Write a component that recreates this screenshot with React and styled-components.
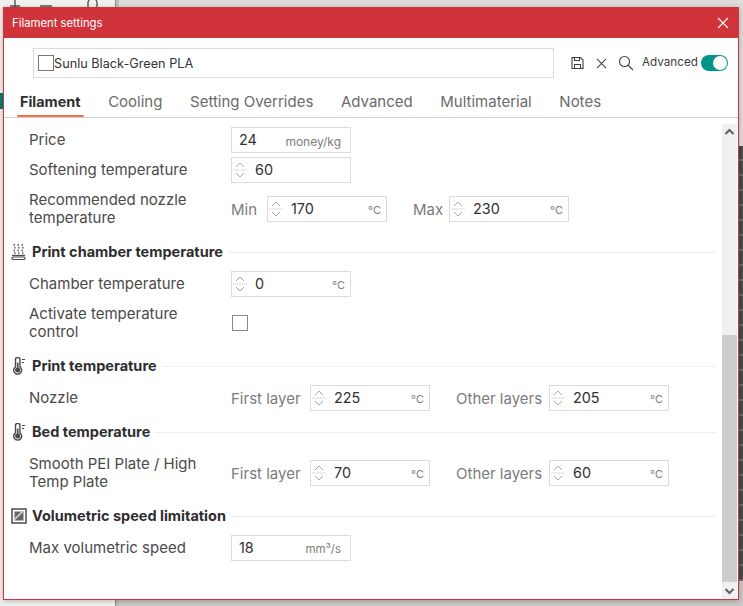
import React from "react";
import styled, { createGlobalStyle } from "styled-components";

const Global = createGlobalStyle`
  html, body { margin: 0; padding: 0; width: 743px; height: 606px; overflow: hidden; background: #e3e3e3; }
  * { box-sizing: border-box; }
  body { font-family: "Inter", "Noto Sans", sans-serif; }
`;

const Desktop = styled.div`
  position: relative; width: 743px; height: 606px; display: flex; overflow: hidden;
`;
const SidePane = styled.div`
  position: relative; width: 119px; flex: none; background: #f1f1f1; border-right: 3px solid #bdbdbd;
  box-shadow: inset -1px 0 0 #8d8d8d;
`;
const PaneIcons = styled.svg`
  display: block; width: 110px; height: 7px; fill: none; stroke: #555; stroke-width: 1.4;
`;
const PaneBadge = styled.div`
  position: absolute; left: 0; top: 93px; width: 3px; height: 16px; background: #00806f;
`;
const Canvas = styled.div`
  flex: 1; display: flex; flex-direction: column; background: #dcdcdc;
`;
const CanvasTop = styled.div`height: 146px; flex: none;`;
const CanvasDark = styled.div`
  height: 435px; flex: none; background: repeating-linear-gradient(#444a4c 0 13px, #696c6e 13px 15px);
`;
const CanvasBottom = styled.div`flex: 1; background: #c8c8c8;`;

const Dialog = styled.div`
  position: absolute; left: 3px; top: 7px; width: 736px; height: 593px;
  background: #fff; border: 1px solid #cf343a; display: flex; flex-direction: column;
  box-shadow: 0 1px 5px rgba(0,0,0,.25);
`;
const TitleBar = styled.div`
  height: 30px; flex: none; background: #d0343a; color: #fff; font-size: 11.3px;
  display: flex; align-items: center; justify-content: space-between; padding: 0 9px 0 8px;
`;
const CloseMark = styled.svg`width: 12px; height: 12px; stroke: #fff; stroke-width: 1.1; fill: none;`;

const Toolbar = styled.div`
  height: 42px; flex: none; display: flex; align-items: center; padding: 10px 0 2px 29px;
`;
const NameField = styled.div`
  width: 521px; height: 30px; flex: none; border: 1px solid #dcdcdc; display: flex; align-items: center; padding-left: 4px;
  font-size: 12.7px; color: #333; margin-right: 17px;
`;
const Swatch = styled.span`width: 16px; height: 16px; border: 1px solid #777; flex: none;`;
const ToolIcon = styled.svg`
  flex: none; fill: none; stroke: #3f3f3f; stroke-width: 1.1; margin-right: ${p => p.$gap}px;
`;
const AdvLabel = styled.span`
  width: 55px; flex: none; white-space: nowrap; font-size: 11.7px; color: #3c3c3c; margin-right: 4px; margin-top: -3px;
`;
const Toggle = styled.span`
  width: 27px; height: 16px; border-radius: 8px; background: #009688; position: relative; flex: none;
  &::after { content: ""; position: absolute; right: 1px; top: 1px; width: 14px; height: 14px; border-radius: 50%; background: #fff; }
`;

const TabBar = styled.div`
  height: 38px; flex: none; display: flex; align-items: center; padding: 0 0 0 16px; gap: 27.6px;
  border-bottom: 1px solid #d0d0d0;
`;
const Tab = styled.div`
  position: relative; height: 100%; display: flex; align-items: center; padding-top: 6px;
  font-size: ${p => (p.$active ? 14.4 : 15)}px;
  color: ${p => (p.$active ? "#2e2e2e" : "#6b6b6b")};
  font-weight: ${p => (p.$active ? 700 : 400)};
  &::after {
    content: ${p => (p.$active ? '""' : "none")}; position: absolute; left: -3px; right: -3px; bottom: 0; height: 2px;
    background: #f2734a; border-radius: 1px;
  }
`;

const Body = styled.div`flex: 1; display: flex; min-height: 0;`;
const Content = styled.div`
  flex: 1; padding: 9px 6px 0 7px; display: flex; flex-direction: column;
`;
const Scrollbar = styled.div`
  width: 15px; flex: none; margin: 6px 1px 0 0; background: #f0f0f0; display: flex; flex-direction: column;
`;
const ScrollArrow = styled.svg`
  width: 15px; height: 17px; flex: none; fill: none; stroke: #606060; stroke-width: 2;
`;
const ScrollGap = styled.div`flex: 1;`;
const ScrollThumb = styled.div`height: 247px; flex: none; background: #cdcdcd;`;

const Row = styled.div`
  display: flex; align-items: center; padding-left: 18px; min-height: 26px; margin-top: ${p => p.$mt || 0}px;
`;
const Label = styled.div`
  width: 202px; flex: none; font-size: 15px; line-height: 18px; color: #4a4a4a; padding-right: 10px;
`;
const SideText = styled.span`
  font-size: 15px; color: #7b7b7b; width: ${p => p.$w}px; flex: none;
`;
const Field = styled.div`
  width: 120px; height: 26px; flex: none; border: 1px solid #dcdcdc; display: flex; align-items: center; position: relative;
  margin-right: ${p => p.$mr || 0}px; background: #fff;
`;
const Spin = styled.svg`width: 17px; height: 24px; flex: none; fill: none; stroke: #aaa; stroke-width: 1;`;
const Num = styled.span`
  font-size: 14.4px; color: #303030; margin: -1px 0 0 ${p => (p.$plain ? 7 : 6)}px;
`;
const Unit = styled.span`
  position: absolute; right: ${p => p.$right}px; top: 6px; font-size: ${p => p.$size}px; color: #7d7d7d;
`;
const Check = styled.span`width: 16px; height: 16px; border: 1px solid #8a8a8a; display: block; margin-left: 1px;`;

const Section = styled.div`
  display: flex; align-items: center; height: 20px; margin-top: ${p => p.$mt}px; margin-bottom: ${p => p.$mb}px;
`;
const SecIcon = styled.svg`width: 16px; height: 18px; flex: none; fill: none; stroke: #4a4a4a; stroke-width: 1.2; margin-right: 5px;`;
const SecTitle = styled.div`font-size: 14.5px; font-weight: 700; color: #2e2e2e; white-space: nowrap; margin-top: -2px;`;
const SecLine = styled.div`flex: 1; height: 1px; background: #eeeeee; margin-left: 5px;`;

const Spinner = () => (
  <Spin viewBox="0 0 17 24">
    <path d="M4 9l4-4 4 4M4 15l4 4 4-4" />
    <path d="M1 12h14" stroke="#ddd" />
  </Spin>
);

const NumField = ({ value, unit, spin = true, right = 5, size = 11, mr }) => (
  <Field $mr={mr}>
    {spin && <Spinner />}
    <Num $plain={!spin}>{value}</Num>
    {unit && <Unit $right={right} $size={size}>{unit}</Unit>}
  </Field>
);

const Thermo = () => (
  <SecIcon viewBox="0 0 16 18">
    <path d="M4.500 2.500a2.200 2.200 0 0 1 4.400 0v7.300a4 4 0 1 1-4.400 0z" strokeWidth="1.400" />
    <circle cx="6.700" cy="13" r="2" fill="#4a4a4a" />
    <path d="M6.700 5.500V12" strokeWidth="1.600" />
    <path d="M11 2.500h3M11 5.500h2" />
  </SecIcon>
);
const Heat = () => (
  <SecIcon viewBox="0 0 16 18">
    <path d="M3.500 1c-1.700 1.700 1.700 3.300 0 5s1.700 3.300 0 5M7.500 1c-1.700 1.700 1.700 3.300 0 5s1.700 3.300 0 5M11.500 1c-1.700 1.700 1.700 3.300 0 5s1.700 3.300 0 5" strokeDasharray="2 1" />
    <path d="M1 12.500h13" />
    <rect x="1" y="14" width="13" height="2.500" rx="1.200" />
  </SecIcon>
);
const Volume = () => (
  <SecIcon viewBox="0 0 16 18">
    <rect x="1" y="2" width="14" height="14" stroke="#555" strokeWidth="1.600" />
    <rect x="3.500" y="4.500" width="9" height="9" fill="#666" stroke="none" />
    <path d="M3.500 12.500l8-8" stroke="#ddd" strokeWidth="1.400" />
  </SecIcon>
);

export default function App() {
  return (
    <Desktop>
      <Global />
      <SidePane>
        <PaneIcons viewBox="0 0 110 7">
          <path d="M15 0v7M10 6h10M40 6h12" />
          <path d="M88 7V3a4.500 4.500 0 0 1 9 0v4" />
        </PaneIcons>
        <PaneBadge />
      </SidePane>
      <Canvas>
        <CanvasTop />
        <CanvasDark />
        <CanvasBottom />
      </Canvas>
      <Dialog>
        <TitleBar>
          <span>Filament settings</span>
          <CloseMark viewBox="0 0 12 12"><path d="M1 1l10 10M11 1L1 11" /></CloseMark>
        </TitleBar>
        <Toolbar>
          <NameField><Swatch />Sunlu Black-Green PLA</NameField>
          <ToolIcon $gap={12} width="13" height="14" viewBox="0 0 13 14">
            <path d="M1 1.500h8.500l2.500 2.500v8.500H1zM3.500 1.500v3h5v-3M3.500 12.500V8.500h6v4" />
          </ToolIcon>
          <ToolIcon $gap={11} width="11" height="11" viewBox="0 0 12 12">
            <path d="M1 1l10 10M11 1L1 11" />
          </ToolIcon>
          <ToolIcon $gap={8} width="16" height="16" viewBox="0 0 16 16">
            <circle cx="6.500" cy="6.500" r="5" />
            <path d="M10 10l5 5" />
          </ToolIcon>
          <AdvLabel>Advanced</AdvLabel>
          <Toggle />
        </Toolbar>
        <TabBar>
          <Tab $active>Filament</Tab>
          <Tab>Cooling</Tab>
          <Tab>Setting Overrides</Tab>
          <Tab>Advanced</Tab>
          <Tab>Multimaterial</Tab>
          <Tab>Notes</Tab>
        </TabBar>
        <Body>
          <Content>
            <Row>
              <Label>Price</Label>
              <NumField value="24" unit="money/kg" right={9} size={12} spin={false} />
            </Row>
            <Row $mt={4}>
              <Label>Softening temperature</Label>
              <NumField value="60" />
            </Row>
            <Row $mt={8}>
              <Label>Recommended nozzle temperature</Label>
              <SideText $w={36}>Min</SideText>
              <NumField value="170" unit="°C" mr={26} />
              <SideText $w={36}>Max</SideText>
              <NumField value="230" unit="°C" />
            </Row>
            <Section $mt={15} $mb={9}><Heat /><SecTitle>Print chamber temperature</SecTitle><SecLine /></Section>
            <Row>
              <Label>Chamber temperature</Label>
              <NumField value="0" unit="°C" />
            </Row>
            <Row $mt={8}>
              <Label>Activate temperature control</Label>
              <Check />
            </Row>
            <Section $mt={15} $mb={9}><Thermo /><SecTitle>Print temperature</SecTitle><SecLine /></Section>
            <Row>
              <Label>Nozzle</Label>
              <SideText $w={79}>First layer</SideText>
              <NumField value="225" unit="°C" mr={26} />
              <SideText $w={93}>Other layers</SideText>
              <NumField value="205" unit="°C" />
            </Row>
            <Section $mt={11} $mb={13}><Thermo /><SecTitle>Bed temperature</SecTitle><SecLine /></Section>
            <Row>
              <Label>Smooth PEI Plate / High Temp Plate</Label>
              <SideText $w={79}>First layer</SideText>
              <NumField value="70" unit="°C" mr={26} />
              <SideText $w={93}>Other layers</SideText>
              <NumField value="60" unit="°C" />
            </Row>
            <Section $mt={15} $mb={9}><Volume /><SecTitle>Volumetric speed limitation</SecTitle><SecLine /></Section>
            <Row>
              <Label>Max volumetric speed</Label>
              <NumField value="18" unit={<>mm³/s</>} right={9} size={11.5} spin={false} />
            </Row>
          </Content>
          <Scrollbar>
            <ScrollArrow viewBox="0 0 15 17"><path d="M3.500 10l4-4 4 4" /></ScrollArrow>
            <ScrollGap />
            <ScrollThumb />
            <ScrollArrow viewBox="0 0 15 17"><path d="M3.500 7l4 4 4-4" /></ScrollArrow>
          </Scrollbar>
        </Body>
      </Dialog>
    </Desktop>
  );
}
